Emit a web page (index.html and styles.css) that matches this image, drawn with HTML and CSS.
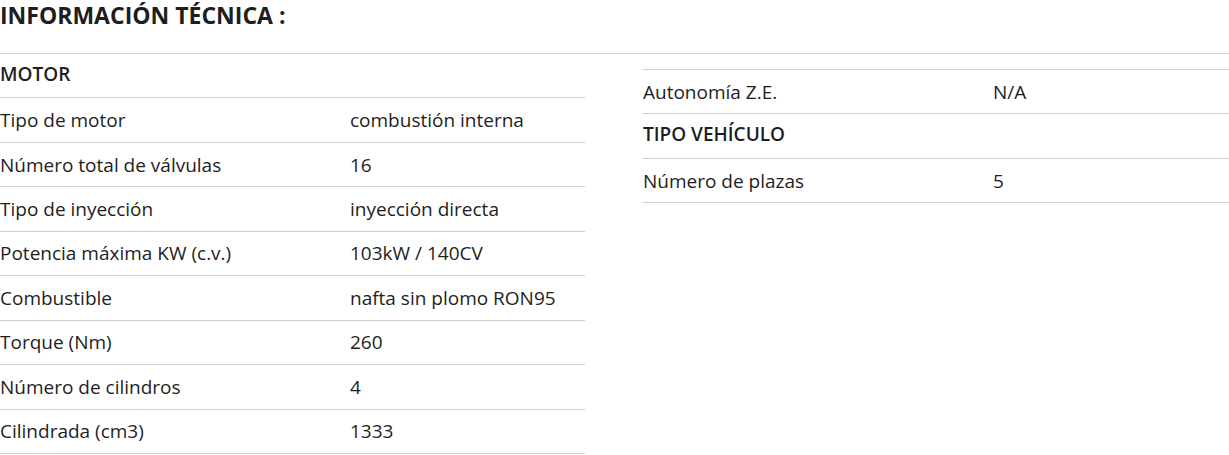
FILE: index.html
```html
<!DOCTYPE html>
<html lang="es">
<head>
<meta charset="utf-8">
<link rel="stylesheet" href="styles.css">
</head>
<body>
<h2 class="title">INFORMACIÓN TÉCNICA :</h2>
<div class="cols">
  <div class="col">
    <div class="row head">MOTOR</div>
    <div class="row"><span class="k">Tipo de motor</span><span class="v">combustión interna</span></div>
    <div class="row"><span class="k">Número total de válvulas</span><span class="v">16</span></div>
    <div class="row"><span class="k">Tipo de inyección</span><span class="v">inyección directa</span></div>
    <div class="row"><span class="k">Potencia máxima KW (c.v.)</span><span class="v">103kW / 140CV</span></div>
    <div class="row"><span class="k">Combustible</span><span class="v">nafta sin plomo RON95</span></div>
    <div class="row"><span class="k">Torque (Nm)</span><span class="v">260</span></div>
    <div class="row"><span class="k">Número de cilindros</span><span class="v">4</span></div>
    <div class="row"><span class="k">Cilindrada (cm3)</span><span class="v">1333</span></div>
  </div>
  <div class="col right">
    <div class="row"><span class="k">Autonomía Z.E.</span><span class="v">N/A</span></div>
    <div class="row head">TIPO VEHÍCULO</div>
    <div class="row"><span class="k">Número de plazas</span><span class="v">5</span></div>
  </div>
</div>
</body>
</html>
```

FILE: styles.css
```css
html, body {
  margin: 0;
  padding: 0;
  background: #fff;
}
body {
  font-family: "Open Sans", "Noto Sans", sans-serif;
  color: #1e1e1e;
  width: 1229px;
}
.title {
  margin: 0;
  font-size: 23px;
  font-weight: 700;
  line-height: 31.5px;
  height: 53px;
  border-bottom: 1px solid #cfcfcf;
}
.cols {
  display: grid;
  grid-template-columns: 585px 1fr;
  column-gap: 58px;
}
.right {
  padding-top: 15px;
}
.right .row:first-child {
  border-top: 1px solid #cfcfcf;
}
.row {
  display: grid;
  grid-template-columns: 350px 1fr;
  align-items: center;
  height: 43.45px;
  border-bottom: 1px solid #cfcfcf;
  font-size: 19px;
}
.row.head {
  display: block;
  line-height: 41px;
  font-weight: 600;
}
```
